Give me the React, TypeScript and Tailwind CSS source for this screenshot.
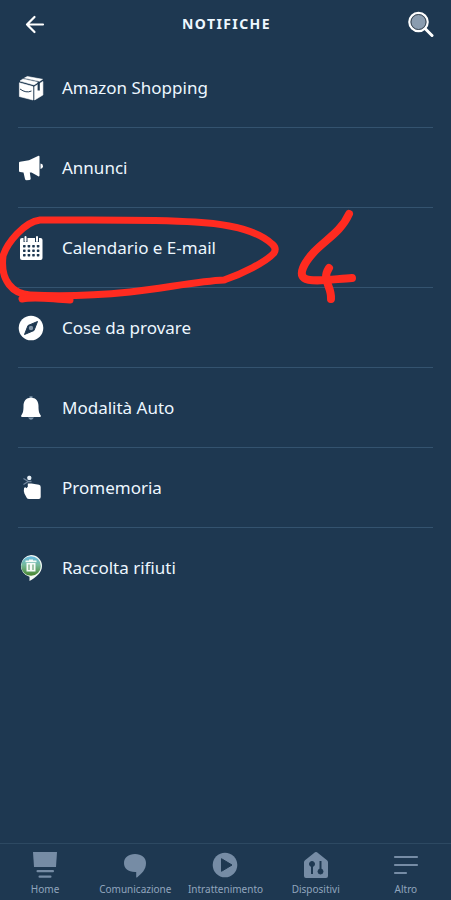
import type { ReactNode } from "react";

const ink = "#1e3851";

function BoxIcon() {
  return (
    <svg viewBox="0 0 26 26" className="size-[26px]" aria-hidden="true">
      <g fill="#fff" stroke="#fff" strokeWidth=".6" strokeLinejoin="round">
        <path d="M1.400 7.800 15 11.600V25L1.400 21.500Z" />
        <path d="M16.600 11.600 24.900 6.500V20L16.600 25Z" />
        <path d="M9.300 1.500 24.500 4.300 21.500 6.300 6.500 3Z" />
        <path d="M5 3.900 20 7.300 16 9.900 2 6.100Z" />
      </g>
      <path d="M2 14Q8 18.500 13.500 16" fill="none" stroke={ink} strokeWidth="1" />
      <path d="M20.700 7v8.500" stroke={ink} strokeWidth="2.200" />
    </svg>
  );
}

function MegaphoneIcon() {
  return (
    <svg viewBox="0 0 26 26" className="size-[26px]" fill="#fff" aria-hidden="true">
      <path d="M2 6.700 11 5.300 20 1q1.500-.7 1.500.8v18.800q0 1.200-1.200.6L13.500 17.500h-1.700l.9 6q.1 1.400-1.200 1.600l-3 .2q-1.200 0-1.500-1.200L5.500 17.500 2 17.100Q1 17 1 15.800v-8q0-1 1-1.100Z" />
      <path d="M22.500 8.500q2.500.4 2.500 2.700t-2.500 2.700Z" />
    </svg>
  );
}

function CalendarIcon() {
  return (
    <svg viewBox="0 0 26 26" className="size-[26px]" aria-hidden="true">
      <rect x="2" y="3" width="22.500" height="22" rx="2" fill="#fff" />
      <g stroke={ink} strokeWidth="4">
        <path d="M7.500 2v5M19 2v5" />
      </g>
      <g stroke="#fff" strokeWidth="2" strokeLinecap="round">
        <path d="M7.500 2v4M19 2v4" />
      </g>
      <g fill={ink}>
        {[10, 14.500, 19].map((y) =>
          [5, 9.600, 14.200, 18.800].map((x) => (
            <rect key={`${x}-${y}`} x={x} y={y} width="2.600" height="2.400" rx=".6" />
          )),
        )}
      </g>
    </svg>
  );
}

function CompassIcon() {
  return (
    <svg viewBox="0 0 26 26" className="size-[26px]" aria-hidden="true">
      <circle cx="13" cy="13" r="12.300" fill="#fff" />
      <path d="M19.500 6.500 16 15.500 6.500 19.500 10 10.500Z" fill={ink} stroke={ink} strokeLinejoin="round" />
      <circle cx="13" cy="13" r="2.200" fill="#8496a8" />
    </svg>
  );
}

function BellIcon() {
  return (
    <svg viewBox="0 0 26 26" className="size-[26px]" aria-hidden="true">
      <path d="M11.500 3V1.200h3V3M10 22.500q3 4.500 6 0Z" fill="#7f95ab" />
      <path d="M13 2.800c5 0 7.500 3.500 7.500 8.200 0 5 .5 7 2.200 9.300q.8 1.700-.7 1.700H4q-1.500 0-.7-1.700C5 18 5.500 16 5.500 11c0-4.700 2.500-8.200 7.500-8.200Z" fill="#fff" />
    </svg>
  );
}

function ReminderIcon() {
  return (
    <svg viewBox="0 0 26 26" className="size-[26px]" aria-hidden="true">
      <path d="m5.500 3.500 4 2.500M5.500 9.500l4-2.500M9 6.500h4.500" stroke="#7489a0" strokeWidth="1.300" />
      <rect x="9.300" y=".8" width="4" height="4.200" rx="1.500" fill="#e8f0f7" />
      <path d="M9.800 8.500h3.700l7.500 1.200q1.700.4 1.700 2.300v10q0 2-2 2h-9.500q-2 0-2.500-1.300l-2.300-4.200q-1-2.500-.3-5.500 1.200-1.500 2.200.3l1.500-1.500Z" fill="#fff" />
    </svg>
  );
}

function WasteIcon() {
  return (
    <svg viewBox="0 0 26 28" className="h-[28px] w-[26px]" aria-hidden="true">
      <defs>
        <linearGradient id="waste" x1="0" y1="0" x2="0" y2="1">
          <stop offset="0" stopColor="#68bce5" />
          <stop offset=".45" stopColor="#75b99a" />
          <stop offset="1" stopColor="#47842b" />
        </linearGradient>
      </defs>
      <path d="M13 1a11 11 0 0 1 11 11c0 7-6.500 11.500-12.500 15v-4.300A11 11 0 0 1 13 1Z" fill="#f2f8f4" />
      <circle cx="13" cy="12" r="9.800" fill="url(#waste)" />
      <path d="M7.500 6.500H11V5.500h4v1h3.500v1.700h-11ZM8.500 9h9v8.500h-9Z" fill="#f5fbf7" />
      <path d="M11 10.500v5.500M15 10.500v5.500" stroke="#5c9c6c" strokeWidth="1.100" />
    </svg>
  );
}

function HomeIcon() {
  return (
    <svg viewBox="0 0 26 28" className="h-7 w-[26px]" fill="#768ca5" aria-hidden="true">
      <path d="M1 1h24l-1 15H2Z" />
      <rect x="4.500" y="19" width="17.500" height="2.200" rx="1" />
      <rect x="6.500" y="24.500" width="13" height="2.200" rx="1" />
    </svg>
  );
}

function ChatIcon() {
  return (
    <svg viewBox="0 0 26 28" className="h-7 w-[26px]" fill="#768ca5" aria-hidden="true">
      <path d="M13 3c6.500 0 11 3.500 11 9 0 7-4.500 10.500-9 14.500q-.8.400-.8-.6V21H13C6 21 2 17.500 2 12s4.500-9 11-9Z" />
    </svg>
  );
}

function PlayIcon() {
  return (
    <svg viewBox="0 0 26 28" className="h-7 w-[26px]" aria-hidden="true">
      <circle cx="13" cy="14" r="12.300" fill="#768ca5" />
      <path d="M9.500 7.700v12.600L20 14Z" fill={ink} stroke={ink} strokeLinejoin="round" />
    </svg>
  );
}

function DevicesIcon() {
  return (
    <svg viewBox="0 0 26 28" className="h-7 w-[26px]" aria-hidden="true">
      <path d="M12 1.300q1-.7 2 0l10 8q1 .8 1 2V25q0 2-2 2H3q-2 0-2-2V11.300q0-1.200 1-2Z" fill="#768ca5" />
      <g fill={ink} stroke={ink}>
        <path d="M9 13v10M17.500 10v10" strokeWidth="2" />
        <circle cx="9" cy="13" r="2.500" />
        <circle cx="17.500" cy="20.500" r="2.500" />
      </g>
    </svg>
  );
}

function MoreIcon() {
  return (
    <svg viewBox="0 0 26 28" className="h-7 w-[26px]" stroke="#768ca5" strokeWidth="2.200" strokeLinecap="round" aria-hidden="true">
      <path d="M2 6h22M2 14h22M2 22h11" />
    </svg>
  );
}

const items: { label: string; icon: ReactNode }[] = [
  { label: "Amazon Shopping", icon: <BoxIcon /> },
  { label: "Annunci", icon: <MegaphoneIcon /> },
  { label: "Calendario e E-mail", icon: <CalendarIcon /> },
  { label: "Cose da provare", icon: <CompassIcon /> },
  { label: "Modalità Auto", icon: <BellIcon /> },
  { label: "Promemoria", icon: <ReminderIcon /> },
  { label: "Raccolta rifiuti", icon: <WasteIcon /> },
];

const tabs: { label: string; icon: ReactNode }[] = [
  { label: "Home", icon: <HomeIcon /> },
  { label: "Comunicazione", icon: <ChatIcon /> },
  { label: "Intrattenimento", icon: <PlayIcon /> },
  { label: "Dispositivi", icon: <DevicesIcon /> },
  { label: "Altro", icon: <MoreIcon /> },
];

function Markup() {
  return (
    <svg
      viewBox="0 0 370 100"
      className="pointer-events-none absolute top-[160px] left-0 h-[100px] w-[370px]"
      fill="none"
      stroke="#ff2b20"
      strokeLinecap="round"
      strokeLinejoin="round"
      aria-hidden="true"
    >
      <path d="M224 72C242 66 266 54 274 45Q277 40 272 36C257 22 230 16 195 14C155 11 82 12 40 12C24 14 7 35 3 48C0 73 13 86 30 87C65 89 100 87 130 84C165 80 200 73 224 72" strokeWidth="7" />
      <path d="M22 91C35 88 50 91 70 92" strokeWidth="7" />
      <path d="M349 6C341 24 325 32 314 44C303 56 299 66 304 70C311 75 334 71 352 70" strokeWidth="8" />
      <path d="M329 60C321 72 332 78 331 91" strokeWidth="8" />
    </svg>
  );
}

export default function App() {
  return (
    <div className="flex min-h-screen flex-col bg-[#1e3851] font-['Noto_Sans',sans-serif] text-[#edf7ff]">
      <header className="flex h-12 items-center justify-between pr-4 pl-[22px]">
        <button type="button" aria-label="Indietro" className="flex size-[26px] items-center justify-center">
          <svg viewBox="0 0 20 20" className="size-5" fill="none" stroke="#fff" strokeWidth="2.200" strokeLinecap="round" strokeLinejoin="round" aria-hidden="true">
            <path d="M18 10.500H2M9.500 3 2 10.500 9.500 18" />
          </svg>
        </button>
        <h1 className="text-sm font-bold tracking-widest">NOTIFICHE</h1>
        <button type="button" aria-label="Cerca" className="flex size-[30px] items-center justify-center">
          <svg viewBox="0 0 28 28" className="size-7" aria-hidden="true">
            <circle cx="12.500" cy="12" r="9.200" fill="#8a9caf" stroke="#fff" strokeWidth="2.200" />
            <circle cx="12.500" cy="12" r="7.500" fill="none" stroke="#3a4753" />
            <path d="m19.500 19 6.500 6.500" stroke="#fff" strokeWidth="3" strokeLinecap="round" />
          </svg>
        </button>
      </header>

      <main className="relative flex-1">
        <ul className="px-[18px]">
          {items.map((item) => (
            <li key={item.label} className="h-20 border-b border-[#34536f] last:border-transparent">
              <button type="button" className="flex h-full w-full items-center gap-[18px] text-left text-[17px]">
                {item.icon}
                <span>{item.label}</span>
              </button>
            </li>
          ))}
        </ul>
        <Markup />
      </main>

      <nav className="grid h-[57px] grid-cols-5 border-t border-[#2d4962] text-[#91a5bd]">
        {tabs.map((tab) => (
          <button key={tab.label} type="button" className="flex flex-col items-center gap-1 pt-[7px] text-[10px] leading-3">
            {tab.icon}
            <span>{tab.label}</span>
          </button>
        ))}
      </nav>
    </div>
  );
}
